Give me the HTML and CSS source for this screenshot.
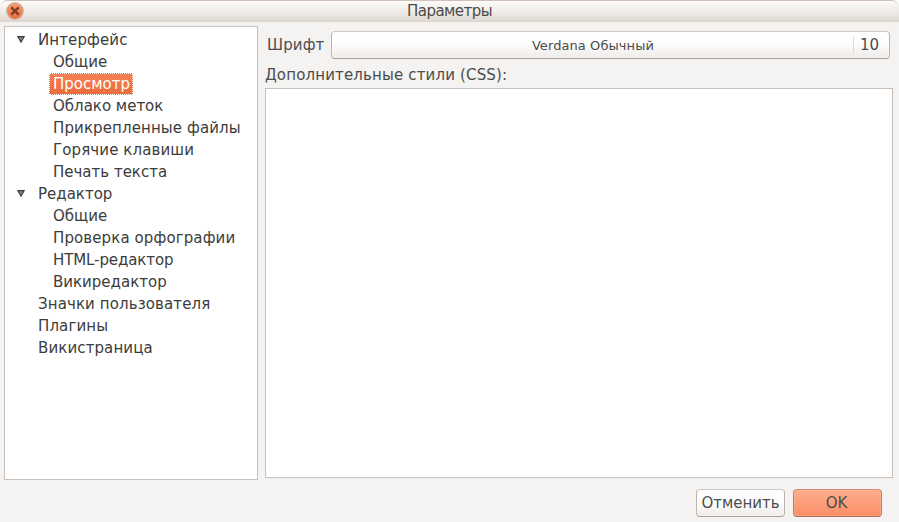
FILE: index.html
```html
<!DOCTYPE html>
<html lang="ru">
<head>
<meta charset="utf-8">
<title>Параметры</title>
<link rel="stylesheet" href="styles.css">
</head>
<body>
<div class="window">
  <header class="titlebar">
    <svg class="close" viewBox="0 0 18 18" width="18" height="18">
      <defs><linearGradient id="g" x1="0" y1="0" x2="0" y2="1"><stop offset="0" stop-color="#f99b72"/><stop offset="1" stop-color="#ee6b3b"/></linearGradient></defs>
      <circle cx="9" cy="9" r="8.3" fill="url(#g)" stroke="#c9b5a8" stroke-width="1.2"/>
      <path d="M5.3 5.3l7.4 7.4M12.7 5.3l-7.4 7.4" stroke="#7b4128" stroke-width="2.4"/>
    </svg>
    <h1 class="title"><span>Параметры</span></h1>
  </header>
  <main class="content">
    <nav class="tree">
      <div class="row parent"><svg class="arrow" viewBox="0 0 8 7" width="8" height="7"><path d="M.9.6h6.2L4 6.1z" fill="#888" stroke="#3c3c3c" stroke-width="1.2"/></svg><span class="wide">Интерфейс</span></div>
      <div class="row child"><span>Общие</span></div>
      <div class="row child"><span class="selected">Просмотр</span></div>
      <div class="row child"><span>Облако меток</span></div>
      <div class="row child"><span class="wide">Прикрепленные файлы</span></div>
      <div class="row child"><span class="wide">Горячие клавиши</span></div>
      <div class="row child"><span>Печать текста</span></div>
      <div class="row parent"><svg class="arrow" viewBox="0 0 8 7" width="8" height="7"><path d="M.9.6h6.2L4 6.1z" fill="#888" stroke="#3c3c3c" stroke-width="1.2"/></svg><span>Редактор</span></div>
      <div class="row child"><span>Общие</span></div>
      <div class="row child"><span class="wide">Проверка орфографии</span></div>
      <div class="row child"><span class="narrow">HTML-редактор</span></div>
      <div class="row child"><span>Викиредактор</span></div>
      <div class="row"><span class="wide">Значки пользователя</span></div>
      <div class="row"><span class="wide">Плагины</span></div>
      <div class="row"><span class="wide">Викистраница</span></div>
    </nav>
    <section class="page">
      <div class="font-row">
        <span class="label wide">Шрифт</span>
        <button class="button font-button"><span class="font-name">Verdana Обычный</span><span class="font-size">10</span></button>
      </div>
      <div class="css-label">Дополнительные стили (CSS):</div>
      <div class="css-box"></div>
    </section>
  </main>
  <footer class="actions">
    <button class="button">Отменить</button>
    <button class="button primary">OK</button>
  </footer>
</div>
</body>
</html>
```
FILE: styles.css
```css
* { box-sizing: border-box; }
body {
  margin: 0;
  background: #fff;
  font: 15px/22px "DejaVu Sans", sans-serif;
  color: #3c3c3c;
}
.window {
  width: 899px;
  height: 522px;
  display: flex;
  flex-direction: column;
  background: #f4f3f1;
  border-radius: 7px 7px 0 0;
  overflow: hidden;
}
.titlebar {
  height: 22px;
  flex: none;
  display: flex;
  align-items: center;
  padding: 0 6px;
  border-top: 1px solid #d0c2b8;
  border-radius: 7px 7px 0 0;
  background: linear-gradient(#fdfcfc, #ece8e3 60%, #ddd6ce);
}
.close { flex: none; margin-top: -1px; }
.title {
  flex: 1;
  margin: 0 18px 0 0;
  text-align: center;
  font: inherit;
  line-height: 20px;
  height: 21px;
  letter-spacing: -.55px;
  color: #4c4c4c;
}
.content {
  display: flex;
  gap: 7px;
  height: 458px;
  padding: 4px 6px 0 4px;
}
.tree {
  width: 254px;
  height: 454px;
  border: 1px solid #c8bfb6;
  background: #fff;
  padding-top: 2px;
  white-space: nowrap;
}
.row { height: 22px; padding-left: 33px; }
.wide { letter-spacing: .11px; }
.narrow { letter-spacing: -.1px; }
.parent { display: flex; padding-left: 12px; align-items: center; }
.arrow { width: 8px; margin: -2px 13px 0 0; }
.child { padding-left: 48px; }
.selected {
  display: inline-block;
  height: 22px;
  margin-left: -4px;
  padding: 0 2px 0 3px;
  line-height: 20px;
  border: 1px dotted #fff;
  background: linear-gradient(#f58053, #ec6c3d);
  color: #fff;
}
.page { flex: 1; color: #4c4c4c; }
.font-row {
  display: flex;
  align-items: center;
  padding: 5px 3px 0 2px;
}
.label { width: 64px; }
.button {
  width: 89px;
  height: 28px;
  padding: 0;
  border: 1px solid;
  border-color: #cfc8c3 #bbb3ae #a89e98;
  border-radius: 4px;
  background: linear-gradient(#fff, #fdfdfd 45%, #efebe8);
  box-shadow: inset 0 0 0 1px #ffffff80;
  font: inherit;
  color: #4c4c4c;
  white-space: nowrap;
}
.font-button { flex: 1; display: flex; align-items: center; }
.font-name { flex: 1; padding: 1px 0 0 1px; text-align: center; font-size: 13px; letter-spacing: .08px; }
.font-size {
  width: 36px;
  height: 17px;
  line-height: 17px;
  border-left: 1px solid #dedbd8;
  padding-left: 6px;
  text-align: left;
}
.css-label { height: 29px; line-height: 32px; letter-spacing: .15px; }
.css-box { height: 390px; width: 628px; border: 1px solid #c8bfb6; background: #fff; }
.actions { display: flex; justify-content: flex-end; gap: 8px; padding: 9px 17px 0 0; }
.primary {
  padding-right: 2px;
  border-color: #cf9077 #c08068 #b07058;
  background: linear-gradient(#ffae8d, #f98e68);
  box-shadow: inset 0 0 0 1px #ffbea050;
}
```
